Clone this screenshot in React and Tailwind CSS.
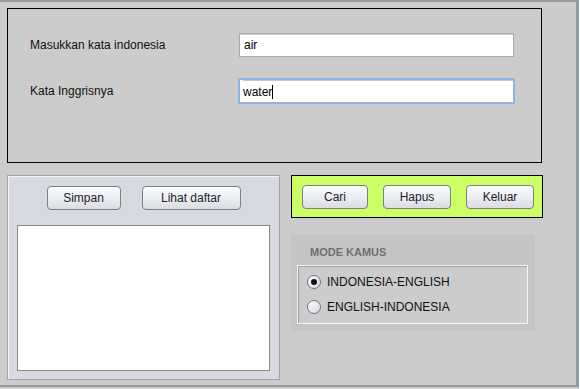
import React from "react";

const font = { fontFamily: '"Liberation Sans", Arial, sans-serif' };

function JButton({ label, width }) {
  return (
    <button
      className={`${width} h-[24px] rounded-[4px] border border-[#7b7f86] bg-gradient-to-b from-[#fbfbfc] via-[#eceef1] to-[#d9dce2] text-[12px] text-[#1c1c2c] shadow-[inset_0_1px_0_#ffffff]`}
    >
      {label}
    </button>
  );
}

function Radio({ checked, label }) {
  return (
    <div className="flex items-center h-[24px]">
      <span className="w-[14px] h-[14px] rounded-full border border-[#6e7480] bg-gradient-to-br from-[#ffffff] to-[#d3d7de] flex items-center justify-center">
        {checked && <span className="w-[6px] h-[6px] rounded-full bg-[#111111]" />}
      </span>
      <span className="ml-[6px] text-[12px] text-[#111111]">{label}</span>
    </div>
  );
}

export default function App() {
  return (
    <div style={font} className="w-[580px] h-[389px] bg-[#cccccc] flex overflow-hidden">
      <div className="w-[578px] h-[387px] border-t-2 border-r-2 border-b-2 border-[#9a9a9a] flex flex-col">
        {/* top panel */}
        <div className="ml-[7px] mt-[6px] w-[535px] h-[155px] border border-black pt-[24px] pl-[22px]">
          <div className="flex items-center h-[24px]">
            <span className="w-[209px] text-[12px] text-[#111111]">Masukkan kata indonesia</span>
            <div className="w-[275px] h-[24px] bg-white border border-[#a9a9a9] shadow-[inset_0_1px_0_#cfcfcf] flex items-center pl-[4px] text-[12px] text-black">
              air
            </div>
          </div>
          <div className="flex items-center h-[26px] mt-[21px]">
            <span className="w-[208px] text-[12px] text-[#111111]">Kata Inggrisnya</span>
            <div className="w-[277px] h-[26px] bg-white border-2 border-[#8fb4e0] flex items-center pl-[3px] text-[12px] text-black">
              <div className="w-full h-full border-t border-[#c8c8c8] flex items-center">
                water<span className="inline-block w-px h-[14px] bg-black" />
              </div>
            </div>
          </div>
        </div>

        {/* bottom area */}
        <div className="flex mt-[12px] ml-[7px]">
          <div className="w-[273px] h-[205px] bg-[#d6d9e0] border border-[#a4a4a8] shadow-[inset_1px_1px_0_#f4f4f6] flex flex-col items-center pt-[10px]">
            <div className="flex gap-[21px]">
              <JButton label="Simpan" width="w-[74px]" />
              <JButton label="Lihat daftar" width="w-[99px]" />
            </div>
            <div className="mt-[15px] w-[253px] h-[146px] bg-white border border-[#8a8a8a]" />
          </div>

          <div className="ml-[11px] flex flex-col">
            <div className="w-[252px] h-[43px] bg-[#ccff66] border border-black flex items-center pl-[10px] gap-[15px]">
              <JButton label="Cari" width="w-[66px]" />
              <JButton label="Hapus" width="w-[68px]" />
              <JButton label="Keluar" width="w-[68px]" />
            </div>

            <div className="mt-[17px] w-[244px] h-[96px] bg-[#c4c4c4] pl-[6px] pt-[10px]">
              <div className="pl-[13px] text-[11px] font-bold text-[#6f6f6f] leading-[14px]">MODE KAMUS</div>
              <div className="mt-[6px] w-[231px] h-[59px] border border-[#f6f6f6] shadow-[inset_1px_1px_0_#a0a0a0] bg-[#cccccc] pl-[9px] pt-[4px]">
                <Radio checked label="INDONESIA-ENGLISH" />
                <div className="mt-[1px]">
                  <Radio label="ENGLISH-INDONESIA" />
                </div>
              </div>
            </div>
          </div>
        </div>
      </div>
      <div className="w-px h-[387px] bg-[#7f9dc2]" />
      <div className="w-px h-[389px] bg-white" />
    </div>
  );
}
